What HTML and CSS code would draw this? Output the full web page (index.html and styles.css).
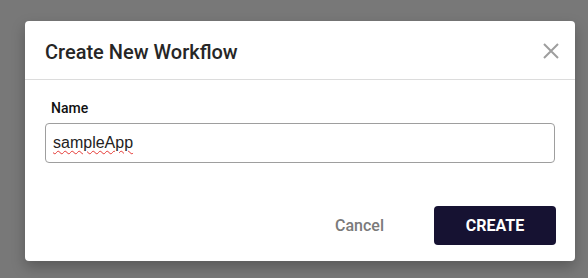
FILE: index.html
```html
<!DOCTYPE html>
<html lang="en">
  <head>
    <meta charset="UTF-8" />
    <meta name="viewport" content="width=device-width, initial-scale=1.0" />
    <title>Create New Workflow</title>
    <link rel="stylesheet" href="styles.css">
  </head>
  <body>
    <div class="overlay">
      <div class="dialog">
        <div class="dialog-header">
          <h2 class="dialog-title">Create New Workflow</h2>
          <button class="close-btn" aria-label="Close">
            <svg width="16" height="16" viewBox="0 0 16 16">
              <path d="M1 1 L15 15 M15 1 L1 15" stroke="#9e9e9e" stroke-width="2" fill="none" />
            </svg>
          </button>
        </div>
        <div class="dialog-body">
          <label class="field-label" for="name">Name</label>
          <div class="field-wrap">
            <input class="field-input" id="name" type="text" value="sampleApp" />
            <!-- spellcheck marker -->
            <span class="spell-mark">sampleApp</span>
          </div>
        </div>
        <div class="dialog-footer">
          <button class="btn-cancel">Cancel</button>
          <button class="btn-create">CREATE</button>
        </div>
      </div>
    </div>
  </body>
</html>
```

FILE: styles.css
```css
body {
  margin: 0;
  height: 100vh;
  background-color: #787878;
  font-family: Roboto, "Liberation Sans", sans-serif;
  overflow: hidden;
}

.overlay {
  padding: 21px 13px 0 25px;
}

.dialog {
  width: 550px;
  height: 240px;
  background-color: #ffffff;
  border-radius: 4px;
  box-shadow: 0 6px 14px rgba(0, 0, 0, 0.25);
  display: flex;
  flex-direction: column;
  box-sizing: border-box;
}

.dialog-header {
  height: 59px;
  display: flex;
  align-items: center;
  justify-content: space-between;
  padding: 0 16px 0 20px;
  border-bottom: 1px solid #dcdcdc;
  box-sizing: border-box;
}

.dialog-title {
  margin: 0;
  font-size: 20px;
  font-weight: 500;
  color: #262626;
  padding-top: 3px;
}

.close-btn {
  border: none;
  background: transparent;
  padding: 0;
  width: 16px;
  height: 16px;
  cursor: pointer;
  margin-top: 2px;
}

.dialog-body {
  padding: 20px 20px 0 20px;
  display: flex;
  flex-direction: column;
}

.field-label {
  font-size: 14px;
  font-weight: 500;
  color: #111111;
  padding-left: 6px;
  margin-bottom: 7px;
}

.field-wrap {
  position: relative;
}

.field-input {
  width: 100%;
  height: 40px;
  border: 1px solid #9e9e9e;
  border-radius: 4px;
  padding: 0 7px;
  font-family: "Liberation Sans", Arial, sans-serif;
  font-size: 16px;
  color: #222222;
  box-sizing: border-box;
  outline: none;
}

.spell-mark {
  position: absolute;
  left: 8px;
  top: 11px;
  font-family: "Liberation Sans", Arial, sans-serif;
  font-size: 16px;
  color: transparent;
  text-decoration: underline wavy #e53935;
  text-decoration-thickness: 1px;
  text-underline-offset: 2px;
  pointer-events: none;
}

.dialog-footer {
  margin-top: auto;
  display: flex;
  justify-content: flex-end;
  align-items: center;
  gap: 50px;
  padding: 0 19px 16px 0;
}

.btn-cancel {
  border: none;
  background: transparent;
  font-family: Roboto, "Liberation Sans", sans-serif;
  font-size: 16px;
  font-weight: 500;
  color: #7a7a7a;
  cursor: pointer;
  padding: 0;
}

.btn-create {
  width: 122px;
  height: 39px;
  border: none;
  border-radius: 4px;
  background-color: #161232;
  color: #ffffff;
  font-family: Roboto, "Liberation Sans", sans-serif;
  font-size: 16px;
  font-weight: 700;
  cursor: pointer;
}
```
